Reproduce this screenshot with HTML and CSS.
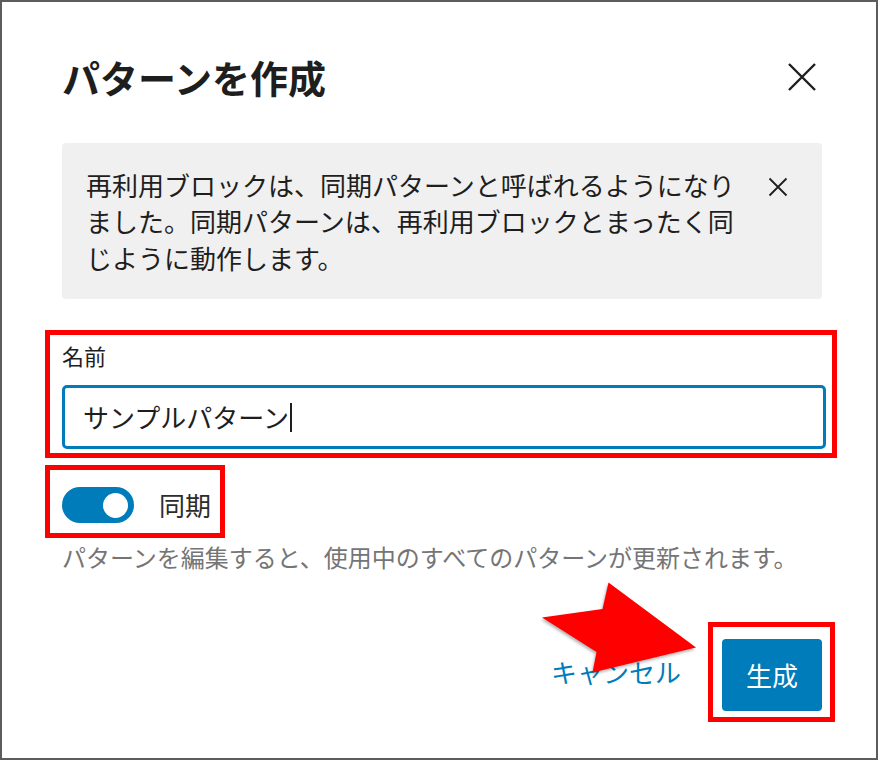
FILE: index.html
```html
<!DOCTYPE html>
<html lang="ja">
<head>
<meta charset="utf-8">
<title>パターンを作成</title>
<link rel="stylesheet" href="styles.css">
</head>
<body>
<div class="frame">
  <div class="header">
    <h1 class="title">パターンを作成</h1>
    <button class="close-btn" aria-label="閉じる">
      <svg width="30" height="30" viewBox="0 0 30 30"><path d="M2 2 L28 28 M28 2 L2 28" stroke="#1e1e1e" stroke-width="2.4" fill="none"/></svg>
    </button>
  </div>

  <div class="notice">
    <p class="notice-text">再利用ブロックは、同期パターンと呼ばれるようになりました。同期パターンは、再利用ブロックとまったく同じように動作します。</p>
    <button class="notice-close" aria-label="通知を閉じる">
      <svg width="20" height="20" viewBox="0 0 20 20"><path d="M1.5 1.5 L18.5 18.5 M18.5 1.5 L1.5 18.5" stroke="#1e1e1e" stroke-width="1.8" fill="none"/></svg>
    </button>
  </div>

  <div class="mark mark-name">
    <div class="label">名前</div>
    <div class="input"><span class="input-text">サンプルパターン</span><span class="caret"></span></div>
  </div>

  <div class="mark mark-toggle">
    <span class="toggle"><span class="knob"></span></span>
    <span class="toggle-label">同期</span>
  </div>

  <p class="help">パターンを編集すると、使用中のすべてのパターンが更新されます。</p>

  <div class="footer">
    <button class="cancel">キャンセル</button>
    <div class="mark mark-btn">
      <button class="primary">生成</button>
    </div>
  </div>

  <svg class="arrow" width="878" height="760" viewBox="0 0 878 760">
    <polygon points="542,617.5 602.5,609 608.5,582.5 696,647.5 592.5,672.5 596.5,652" fill="#ff0000"/>
  </svg>
</div>
</body>
</html>
```

FILE: styles.css
```css
* { box-sizing: border-box; }
html, body { margin: 0; padding: 0; background: #fff; }
body {
  width: 878px;
  height: 760px;
  font-family: "Noto Sans CJK JP", "Noto Sans", sans-serif;
  color: #1e1e1e;
}
.frame {
  position: relative;
  width: 878px;
  height: 760px;
  border: 2px solid #5c5c5c;
  padding: 52px 54px 0 60px;
  overflow: hidden;
}
.header {
  display: flex;
  align-items: center;
  justify-content: space-between;
  width: 760px;
  height: 46px;
}
.title {
  margin: 0;
  font-size: 38px;
  line-height: 46px;
  font-weight: 700;
  color: #1e1e1e;
}
button {
  font-family: inherit;
  border: 0;
  background: none;
  padding: 0;
  margin: 0;
  cursor: pointer;
}
.close-btn {
  width: 40px;
  height: 40px;
  display: flex;
  align-items: center;
  justify-content: center;
}
.notice {
  margin-top: 43px;
  width: 760px;
  height: 156px;
  background: #f0f0f0;
  border-radius: 4px;
  padding: 24px 24px 0 24px;
  display: flex;
  align-items: flex-start;
  gap: 20px;
}
.notice-text {
  margin: 0;
  width: 652px;
  font-size: 26px;
  line-height: 36.4px;
  color: #1e1e1e;
}
.notice-close {
  width: 40px;
  height: 40px;
  display: flex;
  align-items: center;
  justify-content: center;
}
.mark {
  border: 5px solid #ff0000;
}
.mark-name {
  margin-top: 31px;
  margin-left: -17px;
  width: 792px;
  height: 128px;
  padding: 5px 0 0 12px;
}
.label {
  font-size: 22px;
  line-height: 30px;
  color: #1e1e1e;
}
.input {
  margin-top: 15px;
  width: 764px;
  height: 64px;
  border: 3px solid #007cba;
  border-radius: 5px;
  display: flex;
  align-items: center;
  padding-left: 18px;
}
.input-text {
  font-size: 26px;
  line-height: 30px;
  color: #1e1e1e;
}
.caret {
  display: inline-block;
  width: 2px;
  height: 29px;
  background: #1e1e1e;
  margin-left: 1px;
}
.mark-toggle {
  margin-top: 7px;
  margin-left: -17px;
  width: 180px;
  height: 73px;
  padding: 17px 0 0 12px;
  display: flex;
  align-items: flex-start;
  gap: 25px;
}
.toggle {
  width: 72px;
  height: 36px;
  border-radius: 18px;
  background: #007cba;
  display: flex;
  align-items: center;
  justify-content: flex-end;
  padding-right: 6px;
  flex: none;
}
.knob {
  width: 25px;
  height: 25px;
  border-radius: 50%;
  background: #fff;
}
.toggle-label {
  font-size: 26px;
  line-height: 36px;
  color: #2c2c2c;
}
.help {
  margin: 2px 0 0 0;
  font-size: 24px;
  line-height: 34px;
  color: #757575;
}
.footer {
  margin-top: 48px;
  width: 760px;
  display: flex;
  justify-content: flex-end;
  align-items: center;
  gap: 27px;
}
.cancel {
  font-size: 26px;
  line-height: 36px;
  color: #007cba;
}
.mark-btn {
  margin-right: -13px;
  width: 127px;
  height: 100px;
  padding: 12px 0 0 9px;
}
.primary {
  width: 100px;
  height: 72px;
  border-radius: 4px;
  background: #007cba;
  color: #fff;
  font-size: 26px;
  line-height: 72px;
}
.arrow {
  position: absolute;
  left: -2px;
  top: -2px;
  filter: drop-shadow(-1px 2px 1.5px rgba(0,0,0,0.3));
  pointer-events: none;
}
```
